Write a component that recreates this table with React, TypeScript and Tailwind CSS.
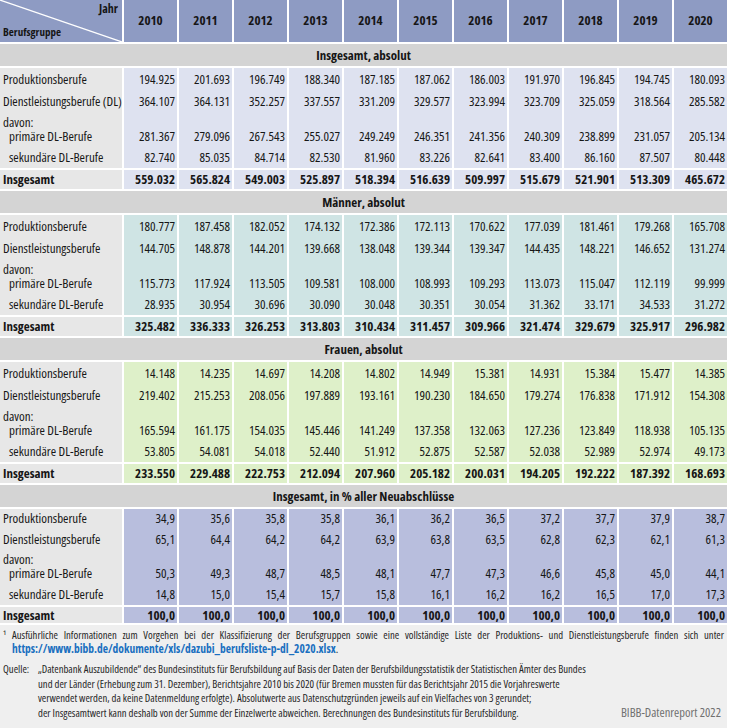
import React from "react";

type Row = { label: string; values: string[]; kind?: "normal" | "davon" | "total" };
type Section = { title: string; cellBg: string; rows: Row[]; compact?: boolean };

const FONT = "font-['Open_Sans',sans-serif] font-stretch-condensed";

const years = ["2010", "2011", "2012", "2013", "2014", "2015", "2016", "2017", "2018", "2019", "2020"];

const sp = (s: string) => s.split(" ");

const sections: Section[] = [
  {
    title: "Insgesamt, absolut",
    cellBg: "bg-[#dee2f0]",
    rows: [
      { label: "Produktionsberufe", values: sp("194.925 201.693 196.749 188.340 187.185 187.062 186.003 191.970 196.845 194.745 180.093") },
      { label: "Dienstleistungsberufe (DL)", values: sp("364.107 364.131 352.257 337.557 331.209 329.577 323.994 323.709 325.059 318.564 285.582") },
      { label: "primäre DL-Berufe", kind: "davon", values: sp("281.367 279.096 267.543 255.027 249.249 246.351 241.356 240.309 238.899 231.057 205.134") },
      { label: "sekundäre DL-Berufe", values: sp("82.740 85.035 84.714 82.530 81.960 83.226 82.641 83.400 86.160 87.507 80.448") },
      { label: "Insgesamt", kind: "total", values: sp("559.032 565.824 549.003 525.897 518.394 516.639 509.997 515.679 521.901 513.309 465.672") },
    ],
  },
  {
    title: "Männer, absolut",
    cellBg: "bg-[#cfe4e4]",
    rows: [
      { label: "Produktionsberufe", values: sp("180.777 187.458 182.052 174.132 172.386 172.113 170.622 177.039 181.461 179.268 165.708") },
      { label: "Dienstleistungsberufe", values: sp("144.705 148.878 144.201 139.668 138.048 139.344 139.347 144.435 148.221 146.652 131.274") },
      { label: "primäre DL-Berufe", kind: "davon", values: sp("115.773 117.924 113.505 109.581 108.000 108.993 109.293 113.073 115.047 112.119 99.999") },
      { label: "sekundäre DL-Berufe", values: sp("28.935 30.954 30.696 30.090 30.048 30.351 30.054 31.362 33.171 34.533 31.272") },
      { label: "Insgesamt", kind: "total", values: sp("325.482 336.333 326.253 313.803 310.434 311.457 309.966 321.474 329.679 325.917 296.982") },
    ],
  },
  {
    title: "Frauen, absolut",
    cellBg: "bg-[#def0c9]",
    rows: [
      { label: "Produktionsberufe", values: sp("14.148 14.235 14.697 14.208 14.802 14.949 15.381 14.931 15.384 15.477 14.385") },
      { label: "Dienstleistungsberufe", values: sp("219.402 215.253 208.056 197.889 193.161 190.230 184.650 179.274 176.838 171.912 154.308") },
      { label: "primäre DL-Berufe", kind: "davon", values: sp("165.594 161.175 154.035 145.446 141.249 137.358 132.063 127.236 123.849 118.938 105.135") },
      { label: "sekundäre DL-Berufe", values: sp("53.805 54.081 54.018 52.440 51.912 52.875 52.587 52.038 52.989 52.974 49.173") },
      { label: "Insgesamt", kind: "total", values: sp("233.550 229.488 222.753 212.094 207.960 205.182 200.031 194.205 192.222 187.392 168.693") },
    ],
  },
  {
    title: "Insgesamt, in % aller Neuabschlüsse",
    cellBg: "bg-[#b8bedd]",
    compact: true,
    rows: [
      { label: "Produktionsberufe", values: sp("34,9 35,6 35,8 35,8 36,1 36,2 36,5 37,2 37,7 37,9 38,7") },
      { label: "Dienstleistungsberufe", values: sp("65,1 64,4 64,2 64,2 63,9 63,8 63,5 62,8 62,3 62,1 61,3") },
      { label: "primäre DL-Berufe", kind: "davon", values: sp("50,3 49,3 48,7 48,5 48,1 47,7 47,3 46,6 45,8 45,0 44,1") },
      { label: "sekundäre DL-Berufe", values: sp("14,8 15,0 15,4 15,7 15,8 16,1 16,2 16,2 16,5 17,0 17,3") },
      { label: "Insgesamt", kind: "total", values: sp("100,0 100,0 100,0 100,0 100,0 100,0 100,0 100,0 100,0 100,0 100,0") },
    ],
  },
];

const GRID = "grid grid-cols-[122px_repeat(11,53px)] gap-x-[2px]";

function DataRow({ row, cellBg, h }: { row: Row; cellBg: string; h: string }) {
  const total = row.kind === "total";
  const davon = row.kind === "davon";
  const indent = row.label.startsWith("primäre") || row.label.startsWith("sekundäre");
  return (
    <div className={`${GRID} ${h} ${total ? "font-bold" : "font-medium"}`}>
      <div className={`bg-[#e7e7e7] pl-[3px] flex flex-col ${davon ? "justify-end pb-[3px]" : "justify-center"} leading-[15px] whitespace-nowrap`}>
        {davon && <div className="leading-[14px]">davon:</div>}
        <div className={indent ? "pl-[6px]" : ""}>{row.label}</div>
      </div>
      {row.values.map((v, i) => (
        <div
          key={i}
          className={`${cellBg} pr-[2px] flex justify-end ${davon ? "items-end pb-[3px]" : "items-center"} leading-[15px]`}
        >
          {v}
        </div>
      ))}
    </div>
  );
}

export default function App() {
  return (
    <div className={`${FONT} w-[730px] h-[728px] bg-white text-[#161616] text-[13px] overflow-hidden`}>
      <div className="w-[727px] h-full flex flex-col">
        {/* header */}
        <div className={`${GRID} h-[42px] shrink-0`}>
          <div className="relative bg-[#8e9bc3] font-bold">
            <svg className="absolute inset-0" width="122" height="42" viewBox="0 0 122 42">
              <line x1="0" y1="0" x2="122" y2="42" stroke="white" strokeWidth="1.2" />
            </svg>
            <div className="absolute right-[4px] top-[1px] text-[12px] leading-[16px]">Jahr</div>
            <div className="absolute left-[3px] bottom-[2px] text-[11px] leading-[16px]">Berufsgruppe</div>
          </div>
          {years.map((y) => (
            <div key={y} className="bg-[#8e9bc3] flex items-center justify-center font-bold">
              {y}
            </div>
          ))}
        </div>
        {sections.map((s, si) => (
          <div key={si} className="flex flex-col shrink-0">
            <div className="h-[2px]" />
            <div className="h-[22px] bg-[#d4d4d4] flex items-center justify-center font-bold leading-[15px]">{s.title}</div>
            <div className="h-[2px]" />
            <DataRow row={s.rows[0]} cellBg={s.cellBg} h={s.compact ? "h-[19px]" : "h-[22px]"} />
            <DataRow row={s.rows[1]} cellBg={s.cellBg} h={s.compact ? "h-[22px]" : "h-[23px]"} />
            <DataRow row={s.rows[2]} cellBg={s.cellBg} h="h-[34px]" />
            <DataRow row={s.rows[3]} cellBg={s.cellBg} h="h-[21px]" />
            <div className="h-[2px]" />
            <DataRow row={s.rows[4]} cellBg={s.cellBg} h={s.compact ? "h-[16px]" : "h-[19px]"} />
          </div>
        ))}
        <div className="h-[2px] shrink-0" />
        {/* footer */}
        <div className="flex-1 bg-[#efefef] text-[10.7px] leading-[14px] px-[3px] pt-[3px] text-[#262626]">
          <div className="whitespace-nowrap flex justify-between">
            {"¹ Ausführliche Informationen zum Vorgehen bei der Klassifizierung der Berufsgruppen sowie eine vollständige Liste der Produktions- und Dienstleistungsberufe finden sich unter"
              .split(" ")
              .map((w, i) => (
                <span key={i}>{w}</span>
              ))}
          </div>
          <div className="pl-[9px] text-[11.5px] font-bold text-[#1a6fc0]">
            https://www.bibb.de/dokumente/xls/dazubi_berufsliste-p-dl_2020.xlsx<span className="text-[#262626] font-normal">.</span>
          </div>
          <div className="flex mt-[6px] leading-[14.5px]">
            <div className="w-[35px] shrink-0">Quelle:</div>
            <div className="flex-1 whitespace-nowrap">
              <div>„Datenbank Auszubildende“ des Bundesinstituts für Berufsbildung auf Basis der Daten der Berufsbildungsstatistik der Statistischen Ämter des Bundes</div>
              <div>und der Länder (Erhebung zum 31. Dezember), Berichtsjahre 2010 bis 2020 (für Bremen mussten für das Berichtsjahr 2015 die Vorjahreswerte</div>
              <div>verwendet werden, da keine Datenmeldung erfolgte). Absolutwerte aus Datenschutzgründen jeweils auf ein Vielfaches von 3 gerundet;</div>
              <div className="flex justify-between items-baseline">
                <span>der Insgesamtwert kann deshalb von der Summe der Einzelwerte abweichen. Berechnungen des Bundesinstituts für Berufsbildung.</span>
                <span className="text-[#707070] text-[12.5px] font-stretch-semi-condensed pr-[3px]">BIBB-Datenreport 2022</span>
              </div>
            </div>
          </div>
        </div>
      </div>
    </div>
  );
}
